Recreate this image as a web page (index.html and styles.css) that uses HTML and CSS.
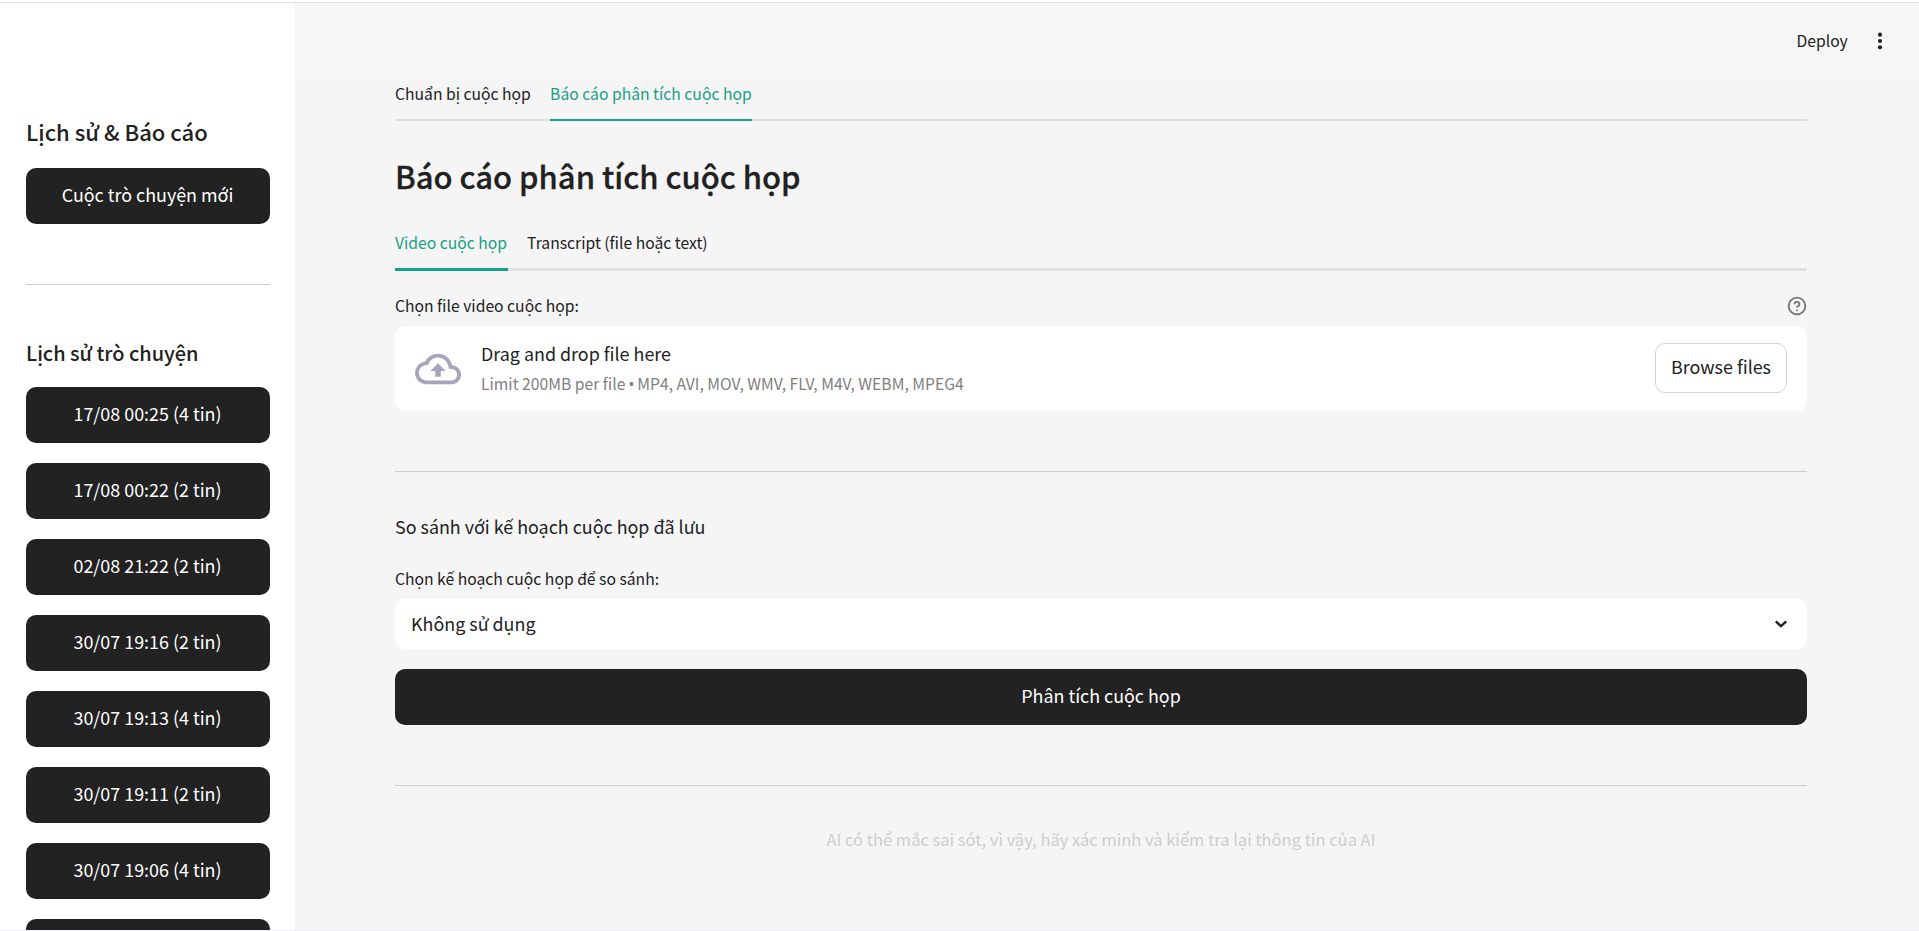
FILE: index.html
```html
<!DOCTYPE html>
<html lang="vi">
<head>
<meta charset="utf-8">
<title>Báo cáo phân tích cuộc họp</title>
<link rel="stylesheet" href="styles.css">
</head>
<body>
<div class="app">
  <aside class="sidebar">
    <h2 class="side-title">Lịch sử &amp; Báo cáo</h2>
    <button class="btn">Cuộc trò chuyện mới</button>
    <hr class="rule side-rule">
    <h3 class="side-subtitle">Lịch sử trò chuyện</h3>
    <div class="history">
      <button class="btn">17/08 00:25 (4 tin)</button>
      <button class="btn">17/08 00:22 (2 tin)</button>
      <button class="btn">02/08 21:22 (2 tin)</button>
      <button class="btn">30/07 19:16 (2 tin)</button>
      <button class="btn">30/07 19:13 (4 tin)</button>
      <button class="btn">30/07 19:11 (2 tin)</button>
      <button class="btn">30/07 19:06 (4 tin)</button>
      <button class="btn"></button>
    </div>
  </aside>
  <main class="main">
    <header class="toolbar">
      <span class="deploy">Deploy</span>
      <svg class="kebab" width="20" height="20" viewBox="0 0 20 20"><circle cx="10" cy="3.7" r="2.1"/><circle cx="10" cy="10" r="2.1"/><circle cx="10" cy="16.3" r="2.1"/></svg>
    </header>
    <div class="content">
      <nav class="tabs tabs-outer">
        <span class="tab">Chuẩn bị cuộc họp</span>
        <span class="tab active">Báo cáo phân tích cuộc họp</span>
      </nav>
      <h1 class="title">Báo cáo phân tích cuộc họp</h1>
      <nav class="tabs tabs-inner">
        <span class="tab active">Video cuộc họp</span>
        <span class="tab">Transcript (file hoặc text)</span>
      </nav>
      <div class="label-row">
        <span class="label label-file">Chọn file video cuộc họp:</span>
        <svg class="help" width="20" height="20" viewBox="0 0 24 24"><circle cx="12" cy="12" r="10"/><path d="M9.09 9a3 3 0 0 1 5.83 1c0 2-3 3-3 3"/><path d="M12 17h.01"/></svg>
      </div>
      <section class="dropzone">
        <svg class="cloud" width="46" height="46" viewBox="0 0 24 24"><path d="M19.35 10.04A7.49 7.49 0 0 0 12 4C9.11 4 6.6 5.64 5.35 8.04A5.994 5.994 0 0 0 0 14c0 3.31 2.69 6 6 6h13c2.76 0 5-2.24 5-5 0-2.64-2.05-4.78-4.65-4.96zM19 18H6c-2.21 0-4-1.79-4-4 0-2.05 1.53-3.76 3.56-3.97l1.07-.11.5-.95A5.469 5.469 0 0 1 12 6c2.62 0 4.88 1.86 5.39 4.43l.3 1.5 1.53.11A2.98 2.98 0 0 1 22 15c0 1.65-1.35 3-3 3zM8 13h2.55v3h2.9v-3H16l-4-4z"/></svg>
        <div class="drop-text">
          <span class="drop-main">Drag and drop file here</span>
          <span class="drop-limit">Limit 200MB per file <span class="bullet">•</span> MP4, AVI, MOV, WMV, FLV, M4V, WEBM, MPEG4</span>
        </div>
        <button class="browse">Browse files</button>
      </section>
      <hr class="rule">
      <p class="compare">So sánh với kế hoạch cuộc họp đã lưu</p>
      <span class="label label-plan">Chọn kế hoạch cuộc họp để so sánh:</span>
      <div class="select">
        <span class="select-value">Không sử dụng</span>
        <svg class="chevron" width="20" height="20" viewBox="0 0 20 20"><path d="M4.8 7.3 10 12.2l5.2-4.9"/></svg>
      </div>
      <button class="btn analyze">Phân tích cuộc họp</button>
      <hr class="rule">
      <p class="caption">AI có thể mắc sai sót, vì vậy, hãy xác minh và kiểm tra lại thông tin của AI</p>
    </div>
  </main>
</div>
</body>
</html>
```

FILE: styles.css
```css
* { box-sizing: border-box; margin: 0; padding: 0; }

body {
  height: 931px;
  overflow: hidden;
  background: #fff;
  color: #212121;
  font-family: "Noto Sans CJK SC", "Noto Sans", sans-serif;
  font-size: 17.9px;
  white-space: nowrap;
  padding-top: 2px;
}

.app {
  display: flex;
  height: 929px;
  border-top: 1px solid #e0e0e0;
  border-bottom: 1px solid #edf1f6;
}

button { font: inherit; border: 0; }

.sidebar {
  width: 295px;
  padding: 108px 25px 0 26px;
  overflow: hidden;
  flex: none;
}

.side-title { font-size: 22.05px; font-weight: 500; line-height: 40px; margin-bottom: 17px; }
.side-subtitle { font-size: 19.95px; font-weight: 500; line-height: 36px; margin-bottom: 16px; }

.btn {
  display: block;
  width: 100%;
  height: 56px;
  flex: none;
  border-radius: 10px;
  background: #222;
  color: #fff;
  line-height: 52px;
  padding-bottom: 4px;
  text-align: center;
}
.sidebar .btn { padding-right: 1px; }

.rule { border: 0; height: 1px; background: #cdcdcd; margin: 60px 0 0; }
.side-rule { margin-bottom: 50px; }
.history { display: flex; flex-direction: column; gap: 20px; }

.main { flex: 1; background: #f5f5f5; }

.toolbar {
  height: 75px;
  background: #f6f6f6;
  display: flex;
  justify-content: flex-end;
  align-items: center;
  gap: 22.4px;
  padding: 0 28.8px 0 0;
}

.deploy { font-size: 15.7px; line-height: 24px; }
.kebab { fill: #212121; }

.content { width: 1412px; margin-left: 100px; }

.tabs { display: flex; gap: 20px; font-size: 15.7px; border-bottom: 2px solid #e0e0e0; }
.tab { line-height: 32px; }
.tab.active { color: #16a085; border-bottom: 2px solid #16a085; margin-bottom: -2px; }
.tabs-outer { height: 43px; gap: 19.3px; }
.tabs-outer .tab { height: 43px; }
.tabs-inner { height: 51px; border-bottom-width: 3px; gap: 19.5px; }
.tabs-inner .tab { height: 51px; line-height: 46px; }
.tabs-inner .active { border-bottom-width: 3px; margin-bottom: -3px; padding-right: .5px; }

.title { font-size: 31px; font-weight: 500; -webkit-text-stroke: .3px #212121; line-height: 50px; margin: 30px 0 19px; }

.label-row { display: flex; justify-content: space-between; align-items: center; height: 30px; margin: 20px 0 5px; }
.label { display: block; font-size: 15.7px; line-height: 30px; }
.help { fill: none; stroke: #757575; stroke-width: 2.2; stroke-linecap: round; stroke-linejoin: round; }

.dropzone {
  height: 85px;
  display: flex;
  align-items: center;
  border-radius: 10px;
  background: #fff;
  padding: 0 20px;
}
.cloud { fill: #a6a5bd; margin-right: 20px; }
.drop-text { display: flex; flex-direction: column; flex: 1; padding-bottom: 2px; }
.drop-main { line-height: 32px; }
.drop-limit { font-size: 15.7px; line-height: 30px; color: #808080; }
.bullet { font-family: "Noto Sans", sans-serif; line-height: 1; margin: 0 -.5px; }
.browse {
  width: 132px;
  height: 50px;
  border: 1px solid #d3d3d3;
  border-radius: 10px;
  background: #fff;
  color: #212121;
  padding-bottom: 4px;
  margin-bottom: 1px;
}

.compare { line-height: 32px; margin-top: 38px; }
.label-plan { margin: 22px 0 5px; }

.select {
  height: 50px;
  display: flex;
  align-items: center;
  justify-content: space-between;
  border-radius: 10px;
  background: #fff;
  padding: 0 16px;
}
.select-value { padding-bottom: 2px; }
.chevron { fill: none; stroke: #212121; stroke-width: 2.4; }
.analyze { margin-top: 20px; }

.caption { text-align: center; color: #cdcdcd; font-size: 16.5px; line-height: 32px; margin-top: 37px; }
```
